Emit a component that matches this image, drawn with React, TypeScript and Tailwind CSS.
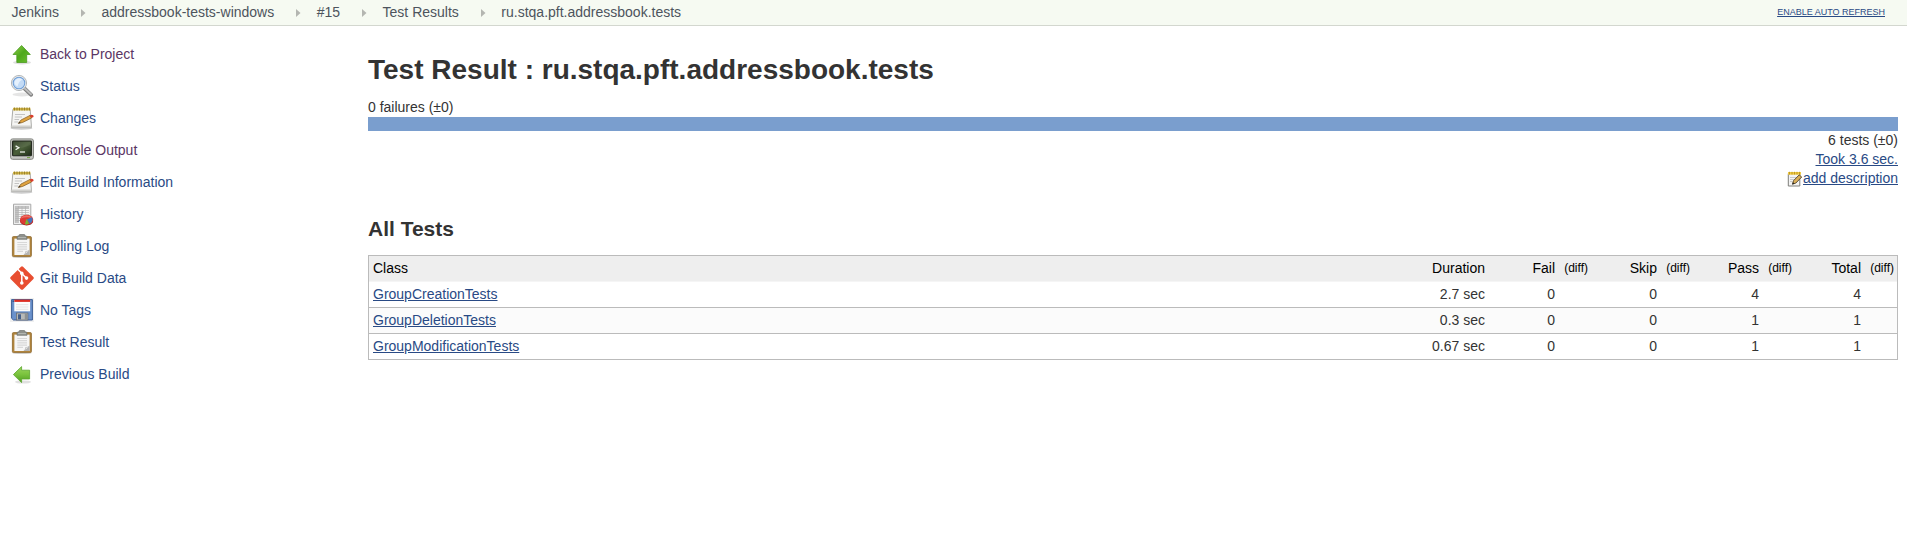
import React from "react";

const svgProps = { width: 24, height: 24, viewBox: "0 0 24 24", className: "block shrink-0" };

const Up = () => (
  <svg {...svgProps}>
    <defs>
      <linearGradient id="up" x1="0" y1="0" x2="1" y2="1">
        <stop offset="0" stopColor="#8fd24a" />
        <stop offset="0.5" stopColor="#4fa81c" />
        <stop offset="1" stopColor="#6cc030" />
      </linearGradient>
    </defs>
    <ellipse cx="12" cy="20.6" rx="9" ry="1.8" fill="#000" opacity="0.13" />
    <path d="M11.6 3.5L20.3 12.5H16.7V20.5H6.8V12.5H3Z" fill="url(#up)" stroke="#4b9a1f" strokeWidth="0.8" />
  </svg>
);

const Left = () => (
  <svg {...svgProps}>
    <defs>
      <linearGradient id="left" x1="0" y1="0" x2="0" y2="1">
        <stop offset="0" stopColor="#9bd65c" />
        <stop offset="0.5" stopColor="#79c23d" />
        <stop offset="1" stopColor="#4f9e22" />
      </linearGradient>
    </defs>
    <ellipse cx="13" cy="20" rx="8" ry="1.6" fill="#000" opacity="0.12" />
    <path d="M3.4 12.6L11.6 4.6V8.2H19.6V17H11.6V20.6Z" fill="url(#left)" stroke="#5aa62c" strokeWidth="0.8" />
  </svg>
);

const Search = () => (
  <svg {...svgProps}>
    <ellipse cx="12" cy="20.5" rx="9.5" ry="1.9" fill="#000" opacity="0.1" />
    <path d="M14.5 14.5L21.2 20.8" stroke="#808080" strokeWidth="3.8" strokeLinecap="round" />
    <path d="M14.8 14.4L21 20.2" stroke="#bdbdbd" strokeWidth="2" strokeLinecap="round" />
    <circle cx="9" cy="9" r="7.6" fill="#ececec" stroke="#a5a8aa" strokeWidth="0.8" />
    <circle cx="9" cy="9" r="5.8" fill="#c3dbf6" stroke="#6f9fd8" strokeWidth="1.1" />
    <path d="M4.5 9A4.6 4.6 0 0 1 12.5 5.8Q9 6.5 7.5 12.5Q5 11.5 4.5 9Z" fill="#e6f1fd" />
  </svg>
);

const Notepad = () => (
  <svg {...svgProps}>
    <ellipse cx="11.5" cy="22.2" rx="11" ry="1.5" fill="#000" opacity="0.2" />
    <path d="M2.8 3.5H20.2L21.5 21.5H1.3Z" fill="#f5f5f3" stroke="#a3a39f" strokeWidth="0.9" />
    <path d="M1.5 19.5H21.3V21.5H1.3Z" fill="#d0d0cd" />
    <path d="M3 1.8H20.4V4.5H3Z" fill="#d1b445" />
    <path d="M4.5 1.5V4.5M7 1.5V4.5M9.5 1.5V4.5M12 1.5V4.5M14.5 1.5V4.5M17 1.5V4.5M19.5 1.5V4.5" stroke="#8a7427" strokeWidth="0.8" />
    <path d="M5 8.5H15M4.8 11H12M4.5 13.5H9M4.3 16H8" stroke="#c3c3c3" strokeWidth="1" />
    <path d="M8.4 17.4L11 14L20 9.4L21.6 12L12.5 16.5Z" fill="#e0a33f" stroke="#80571c" strokeWidth="0.7" />
    <path d="M19.7 9.5L21.3 8.8Q23.8 8.8 23.5 11L21.4 12.1Z" fill="#d93d2c" />
    <path d="M8 17.6L9.6 15.7L10.6 17.1Z" fill="#333" />
  </svg>
);

const SmallNotepad = () => (
  <svg width="16" height="16" viewBox="0 0 16 16" className="block shrink-0">
    <path d="M1.3 2.5H12.8V15H1.3Z" fill="#f4f4f4" stroke="#7e7e7a" />
    <path d="M1 1H14V3.7H1Z" fill="#efcb45" />
    <path d="M2.5 0.8V3.5M5 0.8V3.5M7.5 0.8V3.5M10 0.8V3.5M12.5 0.8V3.5" stroke="#b68a1b" strokeWidth="0.8" />
    <path d="M3 6.5H9M3 8.5H7M3 10.5H5" stroke="#c9c9c9" />
    <path d="M5.5 13.2L6.4 9.8L12.2 3.9L14.7 6L8.8 12.1Z" fill="#dbaf57" stroke="#4d4027" strokeWidth="0.9" />
    <path d="M5.3 13.4L6 11.3L7.4 12.6Z" fill="#222" />
  </svg>
);

const Terminal = () => (
  <svg {...svgProps}>
    <defs>
      <linearGradient id="term" x1="0" y1="0" x2="1" y2="1">
        <stop offset="0" stopColor="#2d3b22" />
        <stop offset="0.5" stopColor="#4a5f39" />
        <stop offset="1" stopColor="#1d2b16" />
      </linearGradient>
    </defs>
    <rect x="0.6" y="0.9" width="22.8" height="20.4" rx="2" fill="#c6c7c3" stroke="#82847f" strokeWidth="1" />
    <rect x="2.6" y="3" width="18.8" height="14.8" rx="0.8" fill="url(#term)" stroke="#20261c" strokeWidth="1.1" />
    <path d="M3.2 10.7Q12 10.7 20.8 6.7V3.8H3.2Z" fill="#fff" opacity="0.08" />
    <path d="M5.6 7.9L8.8 9.8L5.6 11.7" fill="none" stroke="#f2f5ee" strokeWidth="1.3" />
    <path d="M10 14H15" stroke="#f2f5ee" strokeWidth="1.2" />
    <path d="M17 19.6H20" stroke="#6ea33c" strokeWidth="1" />
  </svg>
);

const History = () => (
  <svg {...svgProps}>
    <path d="M3.5 2.2H20.8V22.5H3.5Z" fill="#efefef" stroke="#a9a9a9" />
    <path d="M5.3 4H19V21H5.3Z" fill="#f7f7f7" />
    <path d="M5.3 4H19V6.2H5.3ZM5.3 6.2H8V21H5.3Z" fill="#c3c3c3" />
    <path d="M5.3 6.5H19M5.3 8.5H19M5.3 10.5H19M5.3 12.5H19M5.3 14.5H19M5.3 16.5H19M5.3 18.5H19M8.5 4V21M12 4V21M15.5 4V21M5.3 4V21" stroke="#b2b2b2" strokeWidth="0.7" />
    <ellipse cx="16.6" cy="19" rx="6.6" ry="4.4" fill="#a51c1c" />
    <ellipse cx="16.6" cy="17.7" rx="6.6" ry="5" fill="#dc3a33" />
    <path d="M10.8 16.5Q12.5 13.4 16.6 13.2Q20.6 13.4 22.2 16Q16 14.3 10.8 16.5Z" fill="#ee6c62" />
    <path d="M16.8 17.5L21.8 15.3Q24.2 18.7 19.8 21.8Z" fill="#4775bb" />
    <path d="M16.6 16.8L19 21.8Q17 22.8 14.9 22.3Z" fill="#77b934" />
  </svg>
);

const Clipboard = () => (
  <svg {...svgProps}>
    <ellipse cx="12" cy="23.1" rx="10" ry="0.9" fill="#000" opacity="0.15" />
    <rect x="2.4" y="2.6" width="19" height="20" rx="1" fill="#b0843c" stroke="#8c662b" strokeWidth="0.8" />
    <path d="M4.4 4.6H19.6V21H4.4Z" fill="#f6f6f6" />
    <path d="M7.3 8.5H17M7.3 10.7H17M7.3 12.9H17M7.3 15.1H17M7.3 17.3H13" stroke="#d8d8d8" strokeWidth="1.2" />
    <path d="M19.6 15.5V21H13.5Q15.7 19.8 15.6 17Q17.7 17.2 19.6 15.5Z" fill="#b4b4b4" />
    <path d="M19.2 16.2Q17.8 17.8 16.2 17.6Q16.2 19 15 20.3Z" fill="#eee" />
    <path d="M7 5.3V3Q7 2 8.2 2H9V1.4Q9 0.5 10 0.5H14Q15 0.5 15 1.4V2H16Q17 2 17 3V5.3Z" fill="#8f918c" stroke="#70726e" strokeWidth="0.7" />
    <path d="M8 3.6H16" stroke="#b7b9b4" />
  </svg>
);

const Git = () => (
  <svg {...svgProps}>
    <path d="M12 0.2Q12.5 0.2 13 0.7L23.4 11.1Q24.2 12 23.4 12.9L13 23.4Q12 24.2 11 23.4L0.6 12.9Q-0.2 12 0.6 11.1L11 0.7Q11.5 0.2 12 0.2Z" fill="#e84e31" />
    <path d="M7.8 3.2L11.8 7.2V17.3M11.8 7.4L16.3 12" fill="none" stroke="#fff" strokeWidth="1.5" />
    <circle cx="11.8" cy="7.4" r="1.8" fill="#fff" />
    <circle cx="11.8" cy="17" r="1.8" fill="#fff" />
    <circle cx="16.5" cy="12.1" r="1.8" fill="#fff" />
  </svg>
);

const Floppy = () => (
  <svg {...svgProps}>
    <rect width="24" height="24" fill="#f0f0f0" />
    <path d="M1.6 1.6H22.4V22H3.4L1.6 20.3Z" fill="#6b92cc" stroke="#3c5d94" strokeWidth="1" />
    <rect x="4.3" y="2" width="15.8" height="11.3" fill="#fcfcfc" />
    <rect x="4.3" y="1.6" width="15.8" height="2.3" fill="#dc2d22" />
    <path d="M6 6.7H18.3M6 9H18.3M6 11.3H18.3" stroke="#dcdcdc" strokeWidth="0.8" />
    <path d="M2.6 2.5H3.7V4H2.6Z" fill="#284272" />
    <rect x="6.4" y="15" width="11.5" height="7" fill="#b8bab8" stroke="#62666c" strokeWidth="0.7" />
    <rect x="8" y="16.3" width="3" height="5" fill="#455f8a" />
    <path d="M14.8 15.3H17.5V21.7H14.8Z" fill="#8d9192" />
  </svg>
);

const tasks: { label: string; icon: React.ReactNode; visited?: boolean }[] = [
  { label: "Back to Project", icon: <Up />, visited: true },
  { label: "Status", icon: <Search /> },
  { label: "Changes", icon: <Notepad /> },
  { label: "Console Output", icon: <Terminal />, visited: true },
  { label: "Edit Build Information", icon: <Notepad /> },
  { label: "History", icon: <History /> },
  { label: "Polling Log", icon: <Clipboard /> },
  { label: "Git Build Data", icon: <Git /> },
  { label: "No Tags", icon: <Floppy /> },
  { label: "Test Result", icon: <Clipboard /> },
  { label: "Previous Build", icon: <Left /> },
];

const rows = [
  { name: "GroupCreationTests", duration: "2.7 sec", counts: [0, 0, 4, 4] },
  { name: "GroupDeletionTests", duration: "0.3 sec", counts: [0, 0, 1, 1] },
  { name: "GroupModificationTests", duration: "0.67 sec", counts: [0, 0, 1, 1] },
];

const Separator = () => (
  <svg width="5" height="8" viewBox="0 0 5 8" className="mr-[15.5px] ml-[22px]">
    <path d="M0 0L4.5 4L0 8Z" fill="#b4b6b1" />
  </svg>
);

const grid = "grid h-[26px] grid-cols-[1fr_70px_70px_32px_70px_32px_70px_32px_70px_32px] items-center border-b";

export default function App() {
  return (
    <div className="min-h-[559px] bg-white font-['Liberation_Sans',Arial,sans-serif] text-[14px] leading-[19px] text-[#333]">
      <header className="flex h-[26px] items-center justify-between border-b border-[#d3d7cf] bg-[#f6faf2] pr-[22px] pl-[11.5px] text-[#4d545d]">
        <nav className="flex items-center">
          <span>Jenkins</span>
          <Separator />
          <span>addressbook-tests-windows</span>
          <Separator />
          <span>#15</span>
          <Separator />
          <span>Test Results</span>
          <Separator />
          <span>ru.stqa.pft.addressbook.tests</span>
        </nav>
        <a className="-mt-0.5 text-[9px] leading-3 text-[#294a85] underline">ENABLE AUTO REFRESH</a>
      </header>

      <div className="flex">
        <aside className="w-[368px] shrink-0 pt-3 pl-[10px]">
          {tasks.map((t) => (
            <div key={t.label} className="flex h-8 items-center gap-[6px]">
              {t.icon}
              <a className={t.visited ? "text-[#5a3664]" : "text-[#294a85]"}>{t.label}</a>
            </div>
          ))}
        </aside>

        <main className="flex-1 pr-[9px]">
          <h1 className="mt-[26px] text-[28px] leading-9 font-bold">Test Result : ru.stqa.pft.addressbook.tests</h1>
          <div className="mt-[10px]">0 failures (±0)</div>
          <div className="h-[14px] bg-[#7a9ece]" />
          <div className="flex flex-col items-end">
            <span>6 tests (±0)</span>
            <a className="text-[#294a85] underline">Took 3.6 sec.</a>
            <span className="flex items-center">
              <SmallNotepad />
              <a className="text-[#294a85] underline">add description</a>
            </span>
          </div>

          <h2 className="mt-[29px] text-[21px] leading-6 font-bold">All Tests</h2>

          <div className="mt-[14px] border border-b-0 border-[#bbb]">
            <div className={grid + " border-[#f5f5f5] bg-[#eee] text-black"}>
              <span className="pl-1">Class</span>
              <span className="pr-1 text-right">Duration</span>
              {["Fail", "Skip", "Pass", "Total"].map((h) => (
                <React.Fragment key={h}>
                  <span className="pr-1 text-right">{h}</span>
                  <span className="pr-[3px] text-right text-[12px]">(diff)</span>
                </React.Fragment>
              ))}
            </div>
            {rows.map((r) => (
              <div key={r.name} className={grid + " border-[#bbb] even:bg-white odd:bg-[#fbfbfb]"}>
                <a className="pl-1 text-[#294a85] underline">{r.name}</a>
                <span className="pr-1 text-right">{r.duration}</span>
                {r.counts.map((c, i) => (
                  <React.Fragment key={i}>
                    <span className="pr-1 text-right">{c}</span>
                    <span />
                  </React.Fragment>
                ))}
              </div>
            ))}
          </div>
        </main>
      </div>
    </div>
  );
}
